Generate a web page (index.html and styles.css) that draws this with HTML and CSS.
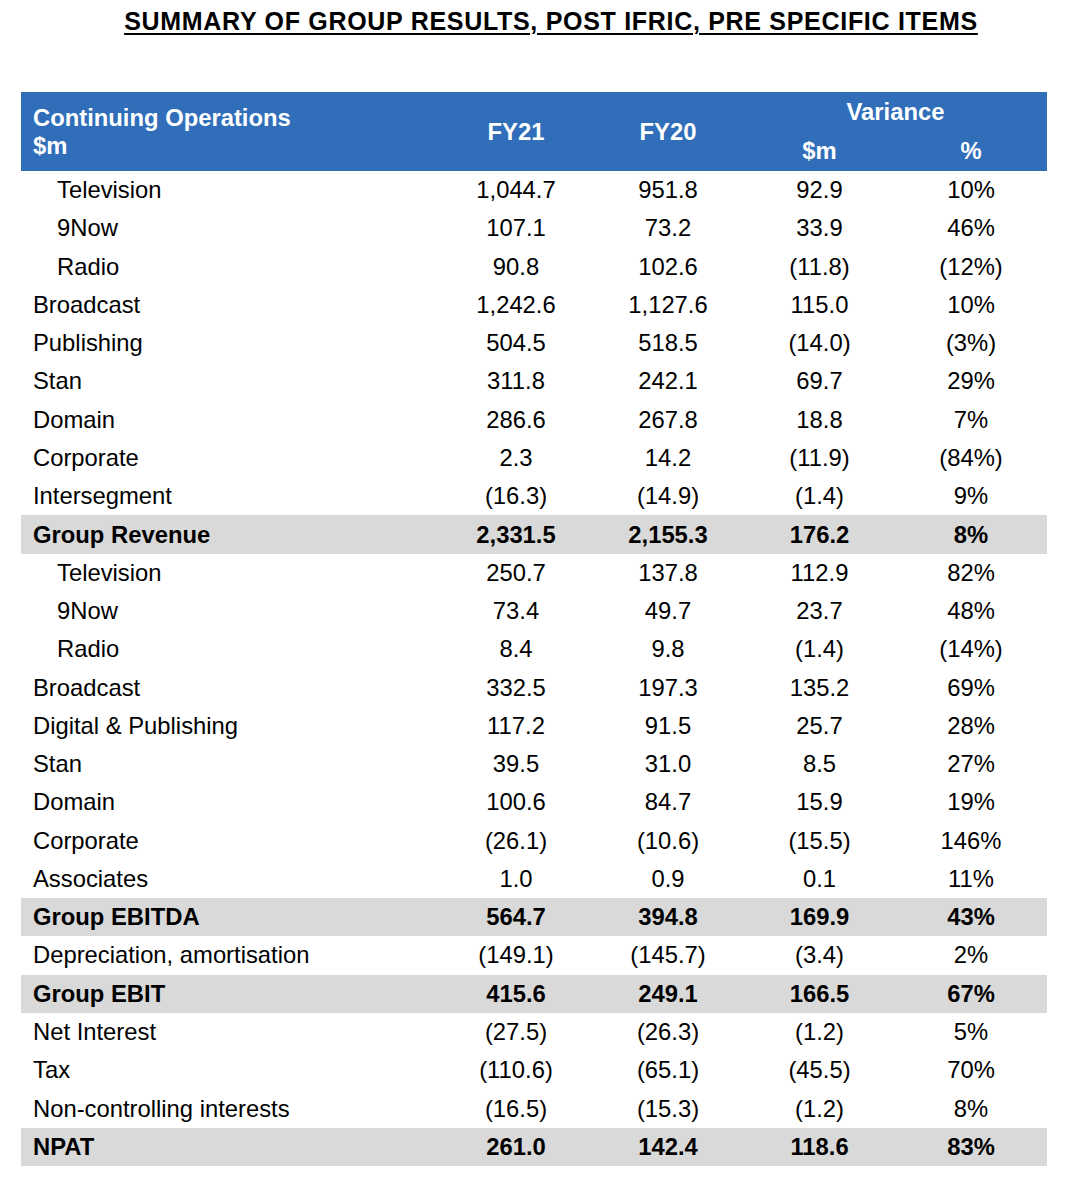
FILE: index.html
```html
<!DOCTYPE html>
<html>
<head>
<meta charset="utf-8">
<link rel="stylesheet" href="styles.css">
</head>
<body>
<h1 class="title">SUMMARY OF GROUP RESULTS, POST IFRIC, PRE SPECIFIC ITEMS</h1>
<div class="table">
  <div class="head">
    <div class="h-label">Continuing Operations<br>$m</div>
    <div class="h-fy21">FY21</div>
    <div class="h-fy20">FY20</div>
    <div class="h-var">Variance</div>
    <div class="h-sm">$m</div>
    <div class="h-pct">%</div>
  </div>
  <div class="row sub"><div class="lbl">Television</div><div>1,044.7</div><div>951.8</div><div>92.9</div><div>10%</div></div>
  <div class="row sub"><div class="lbl">9Now</div><div>107.1</div><div>73.2</div><div>33.9</div><div>46%</div></div>
  <div class="row sub"><div class="lbl">Radio</div><div>90.8</div><div>102.6</div><div>(11.8)</div><div>(12%)</div></div>
  <div class="row"><div class="lbl">Broadcast</div><div>1,242.6</div><div>1,127.6</div><div>115.0</div><div>10%</div></div>
  <div class="row"><div class="lbl">Publishing</div><div>504.5</div><div>518.5</div><div>(14.0)</div><div>(3%)</div></div>
  <div class="row"><div class="lbl">Stan</div><div>311.8</div><div>242.1</div><div>69.7</div><div>29%</div></div>
  <div class="row"><div class="lbl">Domain</div><div>286.6</div><div>267.8</div><div>18.8</div><div>7%</div></div>
  <div class="row"><div class="lbl">Corporate</div><div>2.3</div><div>14.2</div><div>(11.9)</div><div>(84%)</div></div>
  <div class="row"><div class="lbl">Intersegment</div><div>(16.3)</div><div>(14.9)</div><div>(1.4)</div><div>9%</div></div>
  <div class="row total"><div class="lbl">Group Revenue</div><div>2,331.5</div><div>2,155.3</div><div>176.2</div><div>8%</div></div>
  <div class="row sub"><div class="lbl">Television</div><div>250.7</div><div>137.8</div><div>112.9</div><div>82%</div></div>
  <div class="row sub"><div class="lbl">9Now</div><div>73.4</div><div>49.7</div><div>23.7</div><div>48%</div></div>
  <div class="row sub"><div class="lbl">Radio</div><div>8.4</div><div>9.8</div><div>(1.4)</div><div>(14%)</div></div>
  <div class="row"><div class="lbl">Broadcast</div><div>332.5</div><div>197.3</div><div>135.2</div><div>69%</div></div>
  <div class="row"><div class="lbl">Digital &amp; Publishing</div><div>117.2</div><div>91.5</div><div>25.7</div><div>28%</div></div>
  <div class="row"><div class="lbl">Stan</div><div>39.5</div><div>31.0</div><div>8.5</div><div>27%</div></div>
  <div class="row"><div class="lbl">Domain</div><div>100.6</div><div>84.7</div><div>15.9</div><div>19%</div></div>
  <div class="row"><div class="lbl">Corporate</div><div>(26.1)</div><div>(10.6)</div><div>(15.5)</div><div>146%</div></div>
  <div class="row"><div class="lbl">Associates</div><div>1.0</div><div>0.9</div><div>0.1</div><div>11%</div></div>
  <div class="row total"><div class="lbl">Group EBITDA</div><div>564.7</div><div>394.8</div><div>169.9</div><div>43%</div></div>
  <div class="row"><div class="lbl">Depreciation, amortisation</div><div>(149.1)</div><div>(145.7)</div><div>(3.4)</div><div>2%</div></div>
  <div class="row total"><div class="lbl">Group EBIT</div><div>415.6</div><div>249.1</div><div>166.5</div><div>67%</div></div>
  <div class="row"><div class="lbl">Net Interest</div><div>(27.5)</div><div>(26.3)</div><div>(1.2)</div><div>5%</div></div>
  <div class="row"><div class="lbl">Tax</div><div>(110.6)</div><div>(65.1)</div><div>(45.5)</div><div>70%</div></div>
  <div class="row"><div class="lbl">Non-controlling interests</div><div>(16.5)</div><div>(15.3)</div><div>(1.2)</div><div>8%</div></div>
  <div class="row total"><div class="lbl">NPAT</div><div>261.0</div><div>142.4</div><div>118.6</div><div>83%</div></div>
</div>
</body>
</html>
```
FILE: styles.css
```css
html, body {
  margin: 0;
  padding: 0;
  background: #ffffff;
}
body {
  font-family: "Liberation Sans", Arial, sans-serif;
  color: #000000;
}
.title {
  margin: 6px 0 56px 0;
  padding-left: 34px;
  font-size: 25px;
  line-height: 30px;
  font-weight: bold;
  letter-spacing: 0.7px;
  text-align: center;
  text-decoration: underline;
  text-decoration-thickness: 2px;
  text-underline-offset: 3px;
}
.table {
  margin-left: 21px;
  width: 1026px;
  font-size: 23.8px;
}
.head {
  display: grid;
  grid-template-columns: 419px 152px 152px 151px 152px;
  grid-template-rows: 39.5px 39.5px;
  background: #306eba;
  color: #ffffff;
  font-weight: bold;
}
.h-label {
  grid-column: 1;
  grid-row: 1 / span 2;
  padding: 12px 0 0 12px;
  line-height: 28px;
}
.h-fy21, .h-fy20 {
  grid-row: 1 / span 2;
  display: flex;
  align-items: center;
  justify-content: center;
}
.h-fy21 { grid-column: 2; }
.h-fy20 { grid-column: 3; }
.h-var {
  grid-column: 4 / span 2;
  grid-row: 1;
  display: flex;
  align-items: center;
  justify-content: center;
}
.h-sm, .h-pct {
  grid-row: 2;
  display: flex;
  align-items: center;
  justify-content: center;
}
.h-sm { grid-column: 4; }
.h-pct { grid-column: 5; }
.row {
  display: grid;
  grid-template-columns: 419px 152px 152px 151px 152px;
  height: 38.27px;
  align-items: center;
  text-align: center;
}
.row .lbl {
  text-align: left;
  padding-left: 12px;
}
.row.sub .lbl {
  padding-left: 36px;
}
.row.total {
  background: #d9d9d9;
  font-weight: bold;
}
```
